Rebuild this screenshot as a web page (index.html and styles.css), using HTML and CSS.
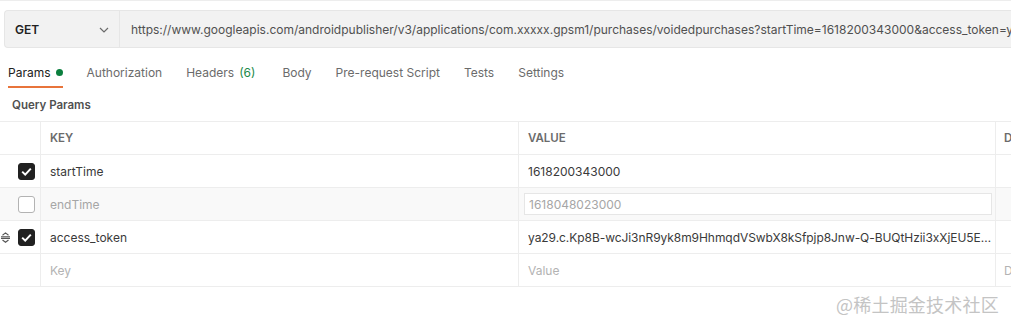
FILE: index.html
```html
<!DOCTYPE html>
<html>
<head>
<meta charset="utf-8">
<link rel="stylesheet" href="styles.css">
</head>
<body>
<div class="page">
  <div class="reqbar">
    <div class="method">
      <span class="method-name">GET</span>
      <svg class="chev" width="10" height="6" viewBox="0 0 10 6"><path d="M1 1l4 4 4-4" fill="none" stroke="#6b6b6b" stroke-width="1.2"/></svg>
    </div>
    <div class="url"><span class="url-text">https://www.googleapis.com/androidpublisher/v3/applications/com.xxxxx.gpsm1/purchases/voidedpurchases?startTime=1618200343000&amp;access_token=ya29</span></div>
  </div>
  <div class="tabs">
    <div class="tab active">Params<span class="dot"></span></div>
    <div class="tab">Authorization</div>
    <div class="tab">Headers <span class="count">(6)</span></div>
    <div class="tab">Body</div>
    <div class="tab">Pre-request Script</div>
    <div class="tab">Tests</div>
    <div class="tab">Settings</div>
  </div>
  <div class="section-title">Query Params</div>
  <div class="table">
    <div class="row head">
      <div class="c-check"></div>
      <div class="c-key">KEY</div>
      <div class="c-val">VALUE</div>
      <div class="c-desc">D</div>
    </div>
    <div class="row">
      <div class="c-check"><span class="cb on"><svg width="11" height="9" viewBox="0 0 11 9"><path d="M1.2 4.6l3 3 5.6-6" fill="none" stroke="#fff" stroke-width="2"/></svg></span></div>
      <div class="c-key">startTime</div>
      <div class="c-val">1618200343000</div>
      <div class="c-desc"></div>
    </div>
    <div class="row off">
      <div class="c-check"><span class="cb"></span></div>
      <div class="c-key muted">endTime</div>
      <div class="c-val"><div class="valbox">1618048023000</div></div>
      <div class="c-desc"></div>
    </div>
    <div class="row">
      <div class="c-check">
        <svg class="drag" width="11" height="11" viewBox="0 0 11 11"><path d="M2.5 3.2L5.5 0.9 8.5 3.2M1 4.8h9M1 6.4h9M2.5 8L5.5 10.3 8.5 8" fill="none" stroke="#555" stroke-width="1.1"/></svg>
        <span class="cb on"><svg width="11" height="9" viewBox="0 0 11 9"><path d="M1.2 4.6l3 3 5.6-6" fill="none" stroke="#fff" stroke-width="2"/></svg></span>
      </div>
      <div class="c-key">access_token</div>
      <div class="c-val"><span class="ellip">ya29.c.Kp8B-wcJi3nR9yk8m9HhmqdVSwbX8kSfpjp8Jnw-Q-BUQtHzii3xXjEU5Ehb7Zx</span></div>
      <div class="c-desc"></div>
    </div>
    <div class="row">
      <div class="c-check"></div>
      <div class="c-key ph">Key</div>
      <div class="c-val ph">Value</div>
      <div class="c-desc ph">D</div>
    </div>
  </div>
  <div class="watermark">@稀土掘金技术社区</div>
</div>
</body>
</html>
```
FILE: styles.css
```css
html, body {
  margin: 0;
  padding: 0;
  background: #fff;
  overflow: hidden;
}
.page {
  width: 1011px;
  height: 329px;
  border-top: 1px solid #ededed;
  font-family: Inter, "Noto Sans", sans-serif;
  color: #212121;
  position: relative;
  overflow: hidden;
  box-sizing: border-box;
}
.reqbar {
  display: flex;
  margin: 9px 0 0 4px;
  height: 38px;
  background: #f2f2f2;
  border: 1px solid #e6e6e6;
  border-right: none;
  border-radius: 4px 0 0 4px;
  box-sizing: border-box;
}
.method {
  width: 115px;
  flex: none;
  display: flex;
  align-items: center;
  justify-content: space-between;
  padding: 0 10px 0 10px;
  box-sizing: border-box;
  border-right: 1px solid #e6e6e6;
}
.method-name {
  font-size: 12px;
  font-weight: 600;
  color: #212121;
}
.chev { margin-top: 1px; }
.url {
  flex: 1;
  min-width: 0;
  padding-left: 11px;
  display: flex;
  align-items: center;
  font-size: 12px;
  color: #505050;
  overflow: hidden;
}
.url-text {
  white-space: nowrap;
  overflow: hidden;
}
.tabs {
  display: flex;
  height: 40px;
  padding-left: 8px;
  gap: 24px;
}
.tab {
  display: flex;
  align-items: center;
  font-size: 12px;
  color: #6b6b6b;
  padding-top: 10px;
  box-sizing: border-box;
  border-bottom: 2px solid transparent;
}
.tab.active {
  color: #212121;
  border-bottom-color: #e8743b;
}
.dot {
  width: 7px;
  height: 7px;
  border-radius: 50%;
  background: #0b7f3e;
  margin-left: 5px;
}
.count { color: #1a8a4a; margin-left: 5px; margin-right: 3px; }
.section-title {
  height: 33px;
  display: flex;
  align-items: center;
  padding-left: 12px;
  font-size: 11.5px;
  font-weight: 600;
  color: #505050;
}
.table {
  border-top: 1px solid #ededed;
}
.row {
  display: flex;
  height: 33px;
  border-bottom: 1px solid #ededed;
  box-sizing: border-box;
  font-size: 12px;
}
.row.off { background: #f9f9f9; }
.row > div {
  display: flex;
  align-items: center;
  box-sizing: border-box;
}
.c-check {
  width: 41px;
  flex: none;
  border-right: 1px solid #ededed;
  justify-content: flex-end;
  padding-right: 5px;
  position: relative;
}
.c-key {
  width: 478px;
  flex: none;
  padding-left: 9px;
  border-right: 1px solid #ededed;
  color: #3a3a3a;
}
.c-val {
  width: 477px;
  flex: none;
  padding-left: 9px;
  padding-right: 1px;
  border-right: 1px solid #ededed;
  color: #3a3a3a;
  min-width: 0;
}
.c-desc {
  flex: 1;
  padding-left: 8px;
  color: #505050;
}
.head .c-key, .head .c-val, .head .c-desc {
  font-weight: 600;
  font-size: 11.5px;
  color: #6b6b6b;
}
.muted { color: #a6a6a6 !important; }
.ph { color: #b3b3b3 !important; }
.ellip {
  display: block;
  min-width: 0;
  white-space: nowrap;
  overflow: hidden;
  text-overflow: ellipsis;
  letter-spacing: -0.06px;
}
.valbox {
  width: 468px;
  height: 22px;
  margin-left: -4px;
  padding-left: 4px;
  border: 1px solid #e6e6e6;
  background: #fff;
  box-sizing: border-box;
  display: flex;
  align-items: center;
  color: #a6a6a6;
}
.cb {
  width: 17px;
  height: 17px;
  border-radius: 3px;
  box-sizing: border-box;
  border: 1px solid #b3b3b3;
  background: #fff;
  display: flex;
  align-items: center;
  justify-content: center;
}
.cb.on {
  background: #212121;
  border-color: #212121;
}
.drag {
  position: absolute;
  left: 0;
  top: 11px;
}
.watermark {
  position: absolute;
  left: 836px;
  top: 290px;
  font-family: "Noto Sans CJK SC", sans-serif;
  font-size: 18px;
  color: #c4c4c4;
  letter-spacing: 0.2px;
}
```
